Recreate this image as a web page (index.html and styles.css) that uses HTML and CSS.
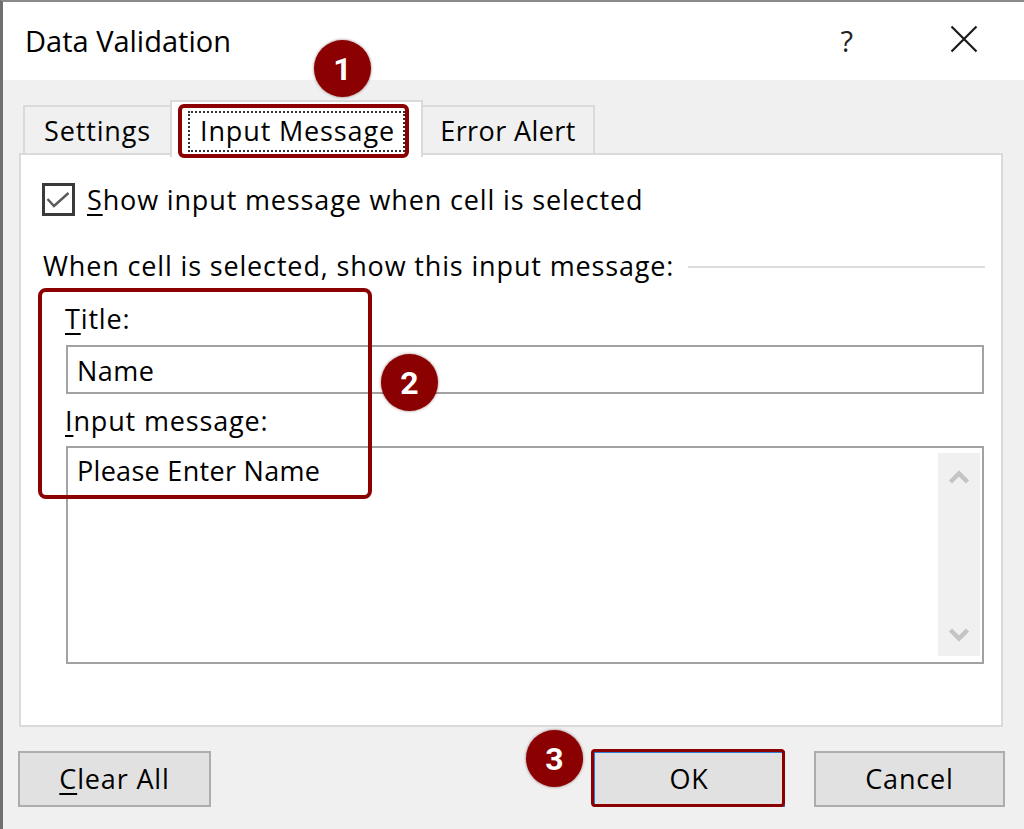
FILE: index.html
```html
<!DOCTYPE html>
<html lang="en">
<head>
<meta charset="utf-8">
<title>Data Validation</title>
<link rel="stylesheet" href="styles.css">
</head>
<body>
<div class="window">
  <div class="titlebar">
    <span class="title">Data Validation</span>
    <span class="help">?</span>
    <svg class="close" width="28" height="28" viewBox="0 0 28 28"><path d="M1.5 1.5 L26.5 26.5 M26.5 1.5 L1.5 26.5" stroke="#1a1a1a" stroke-width="2.2" fill="none"/></svg>
  </div>
  <div class="body">
    <div class="tabs">
      <div class="tab tab-first">Settings</div>
      <div class="tab tab-active"><span class="focus">Input Message</span><span class="mark mark-tab"></span></div>
      <div class="tab tab-last">Error Alert</div>
    </div>
    <div class="panel">
      <div class="check-row">
        <span class="checkbox"><svg width="27" height="27" viewBox="0 0 27 27"><polyline points="2.5,13 9,20 23.5,7" fill="none" stroke="#5a5a5a" stroke-width="2.4"/></svg></span>
        <span><u>S</u>how input message when cell is selected</span>
      </div>
      <div class="group">
        <span>When cell is selected, show this input message:</span>
        <span class="rule"></span>
      </div>
      <div class="fields">
        <div class="label"><u>T</u>itle:</div>
        <div class="input">Name</div>
        <div class="label label-msg"><u>I</u>nput message:</div>
        <div class="textarea">
          <div class="ta-text">Please Enter Name</div>
          <div class="scrollbar">
            <svg width="22" height="14" viewBox="0 0 22 14"><polyline points="2.5,12 11,3.5 19.5,12" fill="none" stroke="#c4c4c4" stroke-width="4.5"/></svg>
            <svg width="22" height="14" viewBox="0 0 22 14"><polyline points="2.5,2 11,10.5 19.5,2" fill="none" stroke="#c4c4c4" stroke-width="4.5"/></svg>
          </div>
        </div>
      </div>
      <span class="mark mark-fields"></span>
      <span class="badge badge-2">2</span>
    </div>
    <div class="buttons">
      <div class="btn btn-clear"><span><u>C</u>lear All</span></div>
      <div class="btn btn-ok"><span>OK</span><span class="mark mark-ok"></span></div>
      <div class="btn btn-cancel"><span>Cancel</span></div>
    </div>
  </div>
  <span class="badge badge-1">1</span>
  <span class="badge badge-3">3</span>
</div>
</body>
</html>
```

FILE: styles.css
```css
html, body {
  margin: 0;
  padding: 0;
}

body {
  background: #f0f0f0;
  font-family: "Open Sans", "Noto Sans", sans-serif;
  font-size: 27px;
  letter-spacing: 0.85px;
  color: #000;
}

u {
  text-decoration-thickness: 2px;
  text-underline-offset: 4px;
}

.window {
  position: relative;
  width: 1024px;
  height: 829px;
  box-sizing: border-box;
  border-left: 3px solid #6f6f6f;
  border-top: 2px solid #8a8a8a;
  display: flex;
  flex-direction: column;
  overflow: hidden;
}

/* title bar */
.titlebar {
  height: 78px;
  flex: none;
  background: #fff;
  display: flex;
  align-items: center;
  padding: 0 46px 0 22px;
}

.title,
.help {
  font-size: 29px;
  line-height: 40px;
  letter-spacing: 0;
  color: #000;
}

.help {
  margin-left: auto;
  color: #222;
}

.close {
  margin-left: 97px;
  margin-bottom: 4px;
}

/* body */
.body {
  flex: 1;
  display: flex;
  flex-direction: column;
  padding: 20px 19px 0 16px;
}

.tabs {
  display: flex;
  align-items: flex-end;
  height: 55px;
  padding-left: 4px;
}

.tab {
  box-sizing: border-box;
  display: flex;
  justify-content: center;
  align-items: flex-start;
  line-height: 36px;
  background: #f0f0f0;
  border-top: 2px solid #dadada;
  white-space: nowrap;
}

.tab-first {
  width: 147px;
  height: 50px;
  border-left: 2px solid #dadada;
  padding-top: 6px;
}

.tab-active {
  position: relative;
  z-index: 1;
  width: 253px;
  height: 57px;
  margin-bottom: -2px;
  background: #fff;
  border: 2px solid #dadada;
  border-bottom: none;
  padding-top: 9px;
}

.tab-last {
  width: 172px;
  height: 50px;
  border-right: 2px solid #dadada;
  padding-top: 6px;
  letter-spacing: 0.4px;
}

.focus {
  display: inline-block;
  border: 2px dotted #333;
  padding: 0 8px 1px 10px;
  line-height: 36px;
}

.mark {
  position: absolute;
  box-sizing: border-box;
  border: 4px solid #8b0000;
  border-radius: 6px;
  pointer-events: none;
}

.mark-tab {
  left: 6px;
  top: 2px;
  width: 231px;
  height: 54px;
}

/* panel */
.panel {
  position: relative;
  box-sizing: border-box;
  height: 574px;
  margin-top: -2px;
  margin-right: 2px;
  background: #fff;
  border: 2px solid #dadada;
  padding: 28px 16px 0 21px;
  display: flex;
  flex-direction: column;
}

.check-row {
  display: flex;
  align-items: center;
  gap: 12px;
  height: 33px;
  line-height: 36px;
}

.checkbox {
  box-sizing: border-box;
  width: 33px;
  height: 33px;
  border: 3px solid #3a3a3a;
  display: flex;
}

.group {
  display: flex;
  align-items: center;
  gap: 14px;
  margin-top: 32px;
  padding-left: 1px;
  line-height: 36px;
}

.rule {
  flex: 1;
  height: 2px;
  margin-top: 1px;
  background: #dcdcdc;
}

.fields {
  display: flex;
  flex-direction: column;
  margin: 17px 1px 0 24px;
}

.label {
  line-height: 36px;
  margin-left: -1px;
}

.input {
  box-sizing: border-box;
  height: 49px;
  margin-top: 8px;
  border: 2px solid #a2a2a2;
  display: flex;
  align-items: center;
  padding-left: 9px;
  padding-top: 2px;
  line-height: 36px;
  letter-spacing: 0.5px;
}

.label-msg {
  margin-top: 9px;
}

.textarea {
  box-sizing: border-box;
  height: 218px;
  margin-top: 7px;
  border: 2px solid #a2a2a2;
  display: flex;
}

.ta-text {
  flex: 1;
  padding: 5px 0 0 9px;
  line-height: 36px;
  letter-spacing: 0.3px;
}

.scrollbar {
  width: 42px;
  margin: 5px 2px 6px 0;
  background: #f0f0f0;
  display: flex;
  flex-direction: column;
  align-items: center;
  justify-content: space-between;
  padding: 17px 0 14px;
  box-sizing: border-box;
}

.mark-fields {
  left: 17px;
  top: 133px;
  width: 334px;
  height: 211px;
  border-radius: 8px;
}

/* buttons */
.buttons {
  display: flex;
  margin-top: 24px;
  margin-left: -1px;
  height: 56px;
}

.btn {
  box-sizing: border-box;
  height: 56px;
  background: #e1e1e1;
  border: 2px solid #adadad;
  display: flex;
  align-items: center;
  justify-content: center;
  line-height: 36px;
}

.btn-clear {
  width: 193px;
}

.btn-ok {
  position: relative;
  width: 192px;
  margin-left: auto;
  margin-right: 29px;
  border-color: #2a7fd4;
}

.btn-cancel {
  width: 191px;
}

.mark-ok {
  left: -4px;
  top: -4px;
  width: 194px;
  height: 58px;
  border-width: 3px;
  border-radius: 4px;
}

/* number badges */
.badge {
  position: absolute;
  z-index: 2;
  width: 57px;
  height: 57px;
  border-radius: 50%;
  background: #8b0000;
  color: #fff;
  font-family: "Liberation Sans Narrow", "Roboto", sans-serif;
  font-weight: 700;
  font-size: 32px;
  letter-spacing: 0;
  line-height: 1;
  display: flex;
  align-items: center;
  justify-content: center;
  box-shadow: 0 0 3px rgba(70, 0, 0, 0.55);
}

.badge-1 {
  left: 311px;
  top: 38px;
}

.badge-2 {
  left: 360px;
  top: 199px;
}

.badge-3 {
  left: 523px;
  top: 728px;
}
```
